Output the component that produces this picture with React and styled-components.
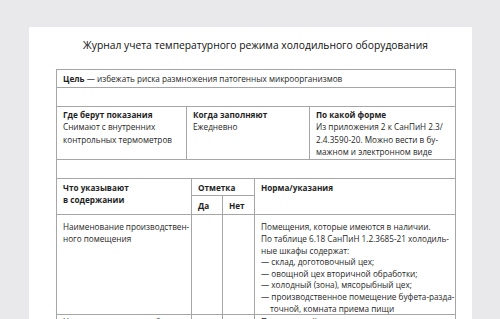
import React from 'react';
import styled, { createGlobalStyle } from 'styled-components';

const GlobalStyle = createGlobalStyle`
  html, body {
    margin: 0;
    padding: 0;
    background: #e9e9eb;
  }
  #root {
    height: 319px;
    overflow: hidden;
  }
`;

const Screen = styled.div`
  height: 319px;
  padding: 27px 28px 0 29px;
  box-sizing: border-box;
  font-family: 'Open Sans', 'Liberation Sans', sans-serif;
  color: #1f1f1f;
`;

const Sheet = styled.div`
  background: #fff;
  height: 100%;
  padding: 11px 17px 0 27px;
  box-sizing: border-box;
`;

const Title = styled.h1`
  margin: 0 -10px;
  text-align: center;
  font-size: 10.3px;
  font-weight: 400;
  line-height: 14px;
  height: 31px;
  color: #111;
`;

const Table = styled.table`
  width: 399px;
  table-layout: fixed;
  border-collapse: collapse;
  font-size: 8.2px;
  line-height: 12.3px;
`;

const Row = styled.tr`
  height: ${(p) => p.$h}px;
`;

const Cell = styled.td`
  border: 1px solid #a6a6a6;
  padding: ${(p) => p.$pad || '2px 6px 1px'};
  vertical-align: top;
  text-align: left;
  white-space: nowrap;
  line-height: ${(p) => p.$lh || 12.3}px;
  font-weight: ${(p) => (p.$bold ? 700 : 400)};
`;

const Label = styled.div`
  font-weight: 700;
`;

const Dash = styled.div`
  padding-left: ${(p) => (p.$cont ? 9 : 0)}px;
`;

const Line = styled.div``;

export default function App() {
  return (
    <>
      <GlobalStyle />
      <Screen>
        <Sheet>
          <Title>Журнал учета температурного режима холодильного оборудования</Title>
          <Table>
            <colgroup>
              <col style={{ width: 130 }} />
              <col style={{ width: 5 }} />
              <col style={{ width: 31 }} />
              <col style={{ width: 32 }} />
              <col style={{ width: 55 }} />
              <col style={{ width: 146 }} />
            </colgroup>
            <tbody>
              <Row $h={18}>
                <Cell colSpan={6} $pad="3px 6px 1px">
                  <b>Цель</b> — избежать риска размножения патогенных микроорганизмов
                </Cell>
              </Row>
              <Row $h={19}>
                <Cell colSpan={6} />
              </Row>
              <Row $h={52}>
                <Cell>
                  <Label>Где берут показания</Label>
                  <Line>Снимают с внутренних</Line>
                  <Line>контрольных термометров</Line>
                </Cell>
                <Cell colSpan={4}>
                  <Label>Когда заполняют</Label>
                  <Line>Ежедневно</Line>
                </Cell>
                <Cell>
                  <Label>По какой форме</Label>
                  <Line>Из приложения 2 к СанПиН 2.3/</Line>
                  <Line>2.4.3590-20. Можно вести в бу-</Line>
                  <Line>мажном и электронном виде</Line>
                </Cell>
              </Row>
              <Row $h={19}>
                <Cell colSpan={6} />
              </Row>
              <Row $h={16}>
                <Cell colSpan={2} rowSpan={2} $bold $pad="3px 6px 1px">
                  <Line>Что указывают</Line>
                  <Line>в содержании</Line>
                </Cell>
                <Cell colSpan={2} $bold $pad="3px 6px 1px">
                  Отметка
                </Cell>
                <Cell colSpan={2} rowSpan={2} $bold $pad="3px 6px 1px">
                  Норма/указания
                </Cell>
              </Row>
              <Row $h={19}>
                <Cell $bold $pad="4px 6px 1px">Да</Cell>
                <Cell $bold $pad="4px 6px 1px">Нет</Cell>
              </Row>
              <Row $h={99}>
                <Cell colSpan={2} $pad="6px 6px 0" $lh={11.6}>
                  <Line>Наименование производствен-</Line>
                  <Line>ного помещения</Line>
                </Cell>
                <Cell />
                <Cell />
                <Cell colSpan={2} $pad="6px 6px 0" $lh={11.6}>
                  <Line>Помещения, которые имеются в наличии.</Line>
                  <Line>По таблице 6.18 СанПиН 1.2.3685-21 холодиль-</Line>
                  <Line>ные шкафы содержат:</Line>
                  <Dash>— склад, доготовочный цех;</Dash>
                  <Dash>— овощной цех вторичной обработки;</Dash>
                  <Dash>— холодный (зона), мясорыбный цех;</Dash>
                  <Dash>— производственное помещение буфета-разда-</Dash>
                  <Dash $cont>точной, комната приема пищи</Dash>
                </Cell>
              </Row>
              <Row $h={40}>
                <Cell colSpan={2} $pad="1px 6px 2px" $lh={11.6}>
                  Номер холодильного оборудования
                </Cell>
                <Cell />
                <Cell />
                <Cell colSpan={2} $pad="1px 6px 2px" $lh={11.6}>
                  Присвоенный номер
                </Cell>
              </Row>
            </tbody>
          </Table>
        </Sheet>
      </Screen>
    </>
  );
}
